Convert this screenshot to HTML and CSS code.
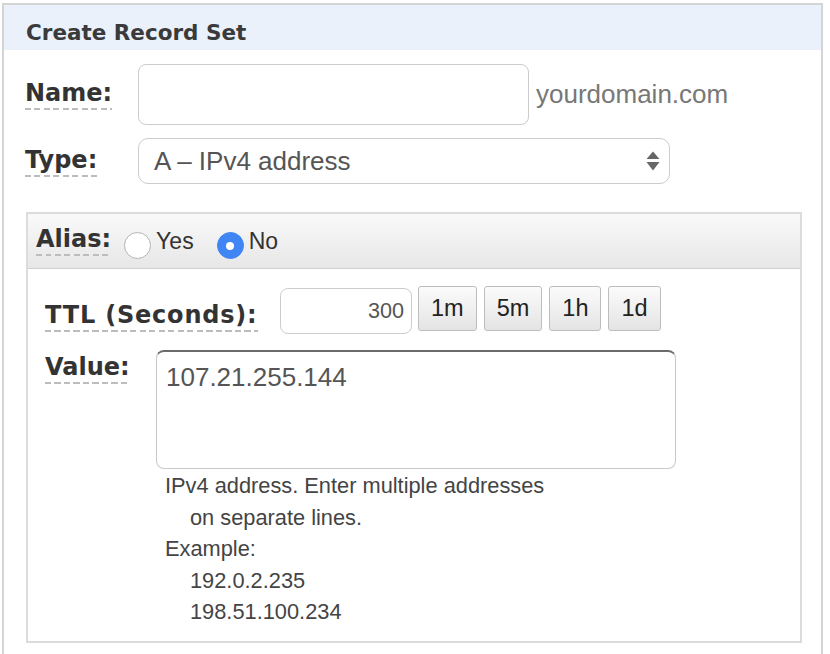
FILE: index.html
```html
<!DOCTYPE html>
<html>
<head>
<meta charset="utf-8">
<title>Create Record Set</title>
<link rel="stylesheet" href="styles.css">
</head>
<body>
<div class="panel">
  <div class="panel-header">Create Record Set</div>
  <div class="panel-body">
    <div class="form-grid">
      <span class="label">Name:</span>
      <div class="name-field">
        <input class="text-input name-input" type="text">
        <span class="domain">yourdomain.com</span>
      </div>
      <span class="label">Type:</span>
      <div class="select">
        <span>A – IPv4 address</span>
        <svg class="select-arrows" width="14" height="20" viewBox="0 0 14 20"><polygon points="0.5,8 7,0.5 13.5,8" fill="#666"/><polygon points="0.5,11 13.5,11 7,19.5" fill="#666"/></svg>
      </div>
    </div>

    <div class="alias-box">
      <div class="alias-header">
        <span class="label">Alias:</span>
        <label class="radio-opt first"><span class="radio"></span><span class="radio-text">Yes</span></label>
        <label class="radio-opt"><span class="radio checked"></span><span class="radio-text">No</span></label>
      </div>
      <div class="alias-body">
        <div class="ttl-row">
          <span class="label ttl-label">TTL (Seconds):</span>
          <div class="ttl-controls">
            <input class="text-input ttl-input" type="text" value="300">
            <button class="btn">1m</button>
            <button class="btn">5m</button>
            <button class="btn">1h</button>
            <button class="btn">1d</button>
          </div>
        </div>
        <div class="value-row">
          <span class="label value-label">Value:</span>
          <div class="value-field">
            <textarea class="value-input">107.21.255.144</textarea>
            <div class="help">
              <div>IPv4 address. Enter multiple addresses</div>
              <div class="indent">on separate lines.</div>
              <div>Example:</div>
              <div class="indent">192.0.2.235</div>
              <div class="indent">198.51.100.234</div>
            </div>
          </div>
        </div>
      </div>
    </div>
  </div>
</div>
</body>
</html>
```

FILE: styles.css
```css
* { box-sizing: border-box; }

body {
  margin: 0;
  background: #fff;
  overflow: hidden;
  font-family: "Liberation Sans", Arial, sans-serif;
}

.panel {
  margin: 3px 0 0 2px;
  width: 821px;
  height: 700px;
  border: 2px solid #d4d4d4;
}

.panel-header {
  height: 45px;
  padding: 10px 0 0 22px;
  line-height: 35px;
  background: #eaf1fb;
  font-family: "DejaVu Sans", Verdana, sans-serif;
  font-weight: bold;
  font-size: 21.5px;
  color: #3a3a3a;
}

.panel-body {
  padding: 14px 0 0 21px;
}

.form-grid {
  display: grid;
  grid-template-columns: 113px auto;
  row-gap: 13px;
  align-items: center;
  justify-items: start;
}

.label {
  display: inline-block;
  font-family: "DejaVu Sans", Verdana, sans-serif;
  font-weight: bold;
  font-size: 24px;
  line-height: 28px;
  padding-bottom: 3px;
  color: #333;
  background-image: repeating-linear-gradient(to right, #bdbdbd 0 6px, transparent 6px 9.5px);
  background-size: 100% 2px;
  background-position: left bottom;
  background-repeat: no-repeat;
  white-space: nowrap;
}

.name-field {
  display: flex;
  align-items: center;
  gap: 7px;
}

.text-input {
  border: 1.5px solid #cccccc;
  border-radius: 8px;
  background: #fff;
  font-family: "Liberation Sans", Arial, sans-serif;
  color: #555;
  outline: none;
  margin: 0;
}

.name-input {
  width: 391px;
  height: 61px;
}

.domain {
  font-size: 26px;
  color: #777;
}

.select {
  width: 532px;
  height: 46px;
  border: 1.5px solid #cccccc;
  border-radius: 10px;
  display: flex;
  align-items: center;
  justify-content: space-between;
  padding: 0 9px 0 15px;
  font-size: 26px;
  color: #555;
  background: #fff;
}

.select-arrows { display: block; }

.alias-box {
  margin: 28px 0 0 1px;
  width: 776px;
  border: 2px solid #dcdcdc;
}

.alias-header {
  height: 55px;
  border-bottom: 1px solid #d0d0d0;
  background: linear-gradient(#f9f9f9, #e7e7e7);
  display: flex;
  align-items: flex-start;
  padding: 11px 8px 0;
}

.radio-opt {
  display: flex;
  align-items: flex-start;
  margin-top: 3px;
  margin-left: 23px;
  font-size: 23px;
  color: #333;
}

.radio-opt.first { margin-left: 13px; }

.radio {
  position: relative;
  width: 27px;
  height: 27px;
  margin-top: 4px;
  border-radius: 50%;
  border: 1px solid #b3b3b3;
  background: #fff;
  margin-right: 5px;
}

.radio.checked {
  background: #3f85f4;
  border-color: #3f85f4;
}

.radio.checked::after {
  content: "";
  position: absolute;
  left: 50%;
  top: 50%;
  width: 8px;
  height: 8px;
  margin: -4px 0 0 -4px;
  border-radius: 50%;
  background: #fff;
}

.radio-text {
  line-height: 27px;
}

.alias-body {
  padding: 19px 0 13px 17px;
}

.ttl-row {
  display: grid;
  grid-template-columns: 235px auto;
  align-items: start;
  justify-items: start;
}

.ttl-label {
  margin-top: 13px;
  letter-spacing: 0.8px;
}

.ttl-controls {
  display: flex;
  align-items: flex-start;
}

.ttl-input {
  width: 132px;
  height: 46px;
  font-size: 21.6px;
  text-align: right;
  padding: 0 7px 0 0;
}

.btn {
  margin: -2px 0 0 7px;
  height: 45px;
  padding: 0 12px;
  border: 1px solid #bdbdbd;
  border-radius: 3px;
  background: linear-gradient(#fbfbfb, #e4e4e4);
  font-family: "Liberation Sans", Arial, sans-serif;
  font-size: 23.5px;
  color: #222;
}

.ttl-input + .btn { margin-left: 6px; }

.value-row {
  margin-top: 16px;
  display: grid;
  grid-template-columns: 111px auto;
  align-items: start;
  justify-items: start;
}

.value-label { margin-top: 3px; }

.value-input {
  display: block;
  width: 520px;
  height: 119px;
  margin: 0;
  border: 1.5px solid #c8c8c8;
  border-top: 2px solid #6b6b6b;
  border-radius: 8px;
  padding: 10px 9px;
  font-family: "Liberation Sans", Arial, sans-serif;
  font-size: 26px;
  line-height: 31px;
  color: #555;
  resize: none;
  outline: none;
}

.help {
  margin-top: 1px;
  padding-left: 9px;
  font-size: 21.8px;
  line-height: 31.5px;
  color: #444;
}

.help .indent { padding-left: 25px; }
```
